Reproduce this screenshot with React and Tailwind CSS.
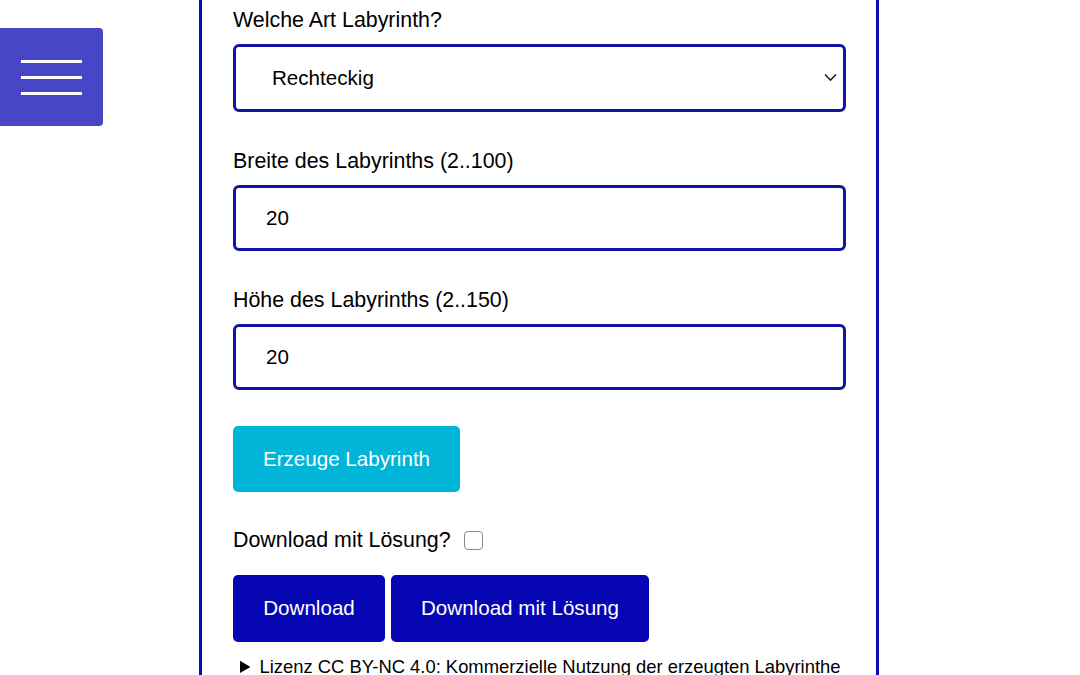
import React, { useState } from "react";

// Labyrinth generator form with a side menu button
export default function App() {
  const [kind, setKind] = useState("rect");
  const [width, setWidth] = useState("20");
  const [height, setHeight] = useState("20");
  const [withSolution, setWithSolution] = useState(false);

  const field =
    "w-[613px] border-[3px] border-[#1212a6] rounded-[6px] bg-white text-[20.6px] text-black outline-none";

  return (
    <div
      className="flex items-start w-[1080px] h-[675px] overflow-hidden bg-white text-black"
      style={{ fontFamily: '"Liberation Sans", Arial, sans-serif' }}
    >
      <button className="mt-[28px] w-[103px] h-[98px] bg-[#4646c6] rounded-r-[4px] flex flex-col items-center justify-center gap-[13px]">
        <span className="block w-[61px] h-[3px] bg-white" />
        <span className="block w-[61px] h-[3px] bg-white" />
        <span className="block w-[61px] h-[3px] bg-white" />
      </button>

      <div className="ml-[96px] w-[680px] h-[720px] border-x-[3px] border-[#0c0cb0] pl-[31px] pt-[8px]">
        <label className="block text-[21.4px] leading-[24px]">Welche Art Labyrinth?</label>
        <div className="relative mt-[12px]">
          <select
            value={kind}
            onChange={(e) => setKind(e.target.value)}
            className={`${field} h-[68px] pl-[36px] appearance-none`}
          >
            <option value="rect">Rechteckig</option>
            <option value="round">Rund</option>
          </select>
          <svg
            className="absolute left-[591px] top-[29px] pointer-events-none"
            width="13"
            height="9"
            viewBox="0 0 13 9"
            fill="none"
          >
            <path d="M1 1.5l5.5 5.5 5.5-5.5" stroke="#222" strokeWidth="1.6" />
          </svg>
        </div>

        <label className="block mt-[37px] text-[21.4px] leading-[24px]">Breite des Labyrinths (2..100)</label>
        <input
          type="number"
          value={width}
          onChange={(e) => setWidth(e.target.value)}
          className={`${field} block mt-[12px] h-[66px] pl-[30px]`}
        />

        <label className="block mt-[37px] text-[21.4px] leading-[24px]">Höhe des Labyrinths (2..150)</label>
        <input
          type="number"
          value={height}
          onChange={(e) => setHeight(e.target.value)}
          className={`${field} block mt-[12px] h-[66px] pl-[30px]`}
        />

        <button className="block mt-[36px] w-[227px] h-[66px] bg-[#00b5d8] rounded-[5px] text-white text-[20.6px]">
          Erzeuge Labyrinth
        </button>

        <div className="flex items-center mt-[36px] h-[24px]">
          <span className="text-[21.4px] leading-[24px]">Download mit Lösung?</span>
          <input
            type="checkbox"
            checked={withSolution}
            onChange={(e) => setWithSolution(e.target.checked)}
            className="ml-[13px] w-[19px] h-[19px] appearance-none border border-[#8a8a8a] rounded-[4px] bg-white"
          />
        </div>

        <div className="flex gap-[6px] mt-[23px]">
          <button className="w-[152px] h-[67px] bg-[#0606b2] rounded-[5px] text-white text-[20.6px]">
            Download
          </button>
          <button className="w-[258px] h-[67px] bg-[#0606b2] rounded-[5px] text-white text-[20.6px]">
            Download mit Lösung
          </button>
        </div>

        <details className="mt-[14px] pl-[7px] text-[18.4px] leading-[22px]">
          <summary>Lizenz CC BY-NC 4.0: Kommerzielle Nutzung der erzeugten Labyrinthe</summary>
        </details>
      </div>
    </div>
  );
}
